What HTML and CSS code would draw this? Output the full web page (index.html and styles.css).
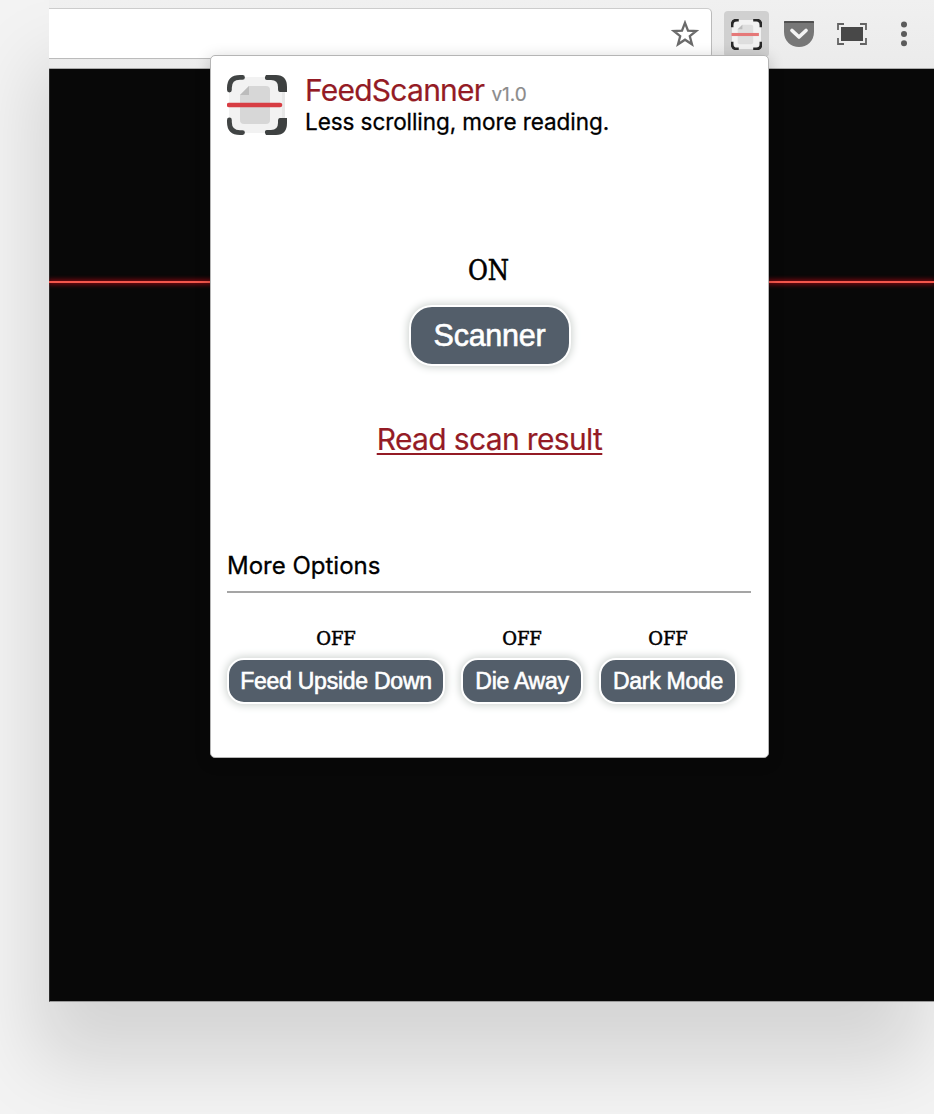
FILE: index.html
```html
<!DOCTYPE html>
<html lang="en">
<head>
<meta charset="utf-8">
<title>FeedScanner</title>
<link rel="stylesheet" href="styles.css">
</head>
<body>
<div class="window">
  <header class="toolbar">
    <div class="address">
      <svg class="star" viewBox="0 0 28 28"><path d="M14 2.8 17 10.6 25.3 11 18.8 16.2 21 24.3 14 19.7 7 24.3 9.2 16.2 2.7 11 11 10.6Z" fill="none" stroke="#6a6a6a" stroke-width="2.3"/></svg>
    </div>
    <div class="scanner-button">
      <svg viewBox="0 0 60 60">
        <rect x="2" y="2" width="56" height="56" rx="10" fill="#f2f2f2"/>
        <path d="M22 11H39Q43 11 43 15V45Q43 49 39 49H17Q13 49 13 45V20Z" fill="#dedede"/>
        <path d="M22 11V20H13Z" fill="#bbb"/>
        <path d="M2 16V12Q2 2 12 2H15M43 2H49Q58 2 58 12V16M58 44V49Q58 58 49 58H43M15 58H12Q2 58 2 48V44" fill="none" stroke="#282828" stroke-width="5.5"/>
        <path d="M1 30H54" stroke="#e57878" stroke-width="6"/>
      </svg>
    </div>
    <svg class="pocket" viewBox="0 0 30 27"><path d="M1 0H29Q30 0 30 1V11C30 20 23 26 15 26S0 20 0 11V1Q0 0 1 0Z" fill="#777"/><path d="M0 2V1Q0 0 1 0H29Q30 0 30 1V2Z" fill="#505050"/><path d="M8 9.5 15 16 22 9.5" fill="none" stroke="#f4f4f4" stroke-width="3.7" stroke-linecap="round" stroke-linejoin="round"/></svg>
    <svg class="capture" viewBox="0 0 30 22"><path d="M4 4H26V18H4Z" fill="#484848"/><path d="M1 7V1H7M23 1H29V7M29 15V21H23M7 21H1V15" fill="none" stroke="#636363" stroke-width="1.8"/></svg>
    <svg class="dots" viewBox="0 0 6 26"><circle cx="3" cy="3.5" r="3"/><circle cx="3" cy="13" r="3"/><circle cx="3" cy="22.3" r="3"/></svg>
  </header>
  <main class="page"><div class="scanline"></div></main>
  <section class="popup">
    <div class="brand">
      <svg class="logo" viewBox="0 0 60 60">
        <rect x="2" y="2" width="56" height="56" rx="11" fill="#e8e8e8"/>
        <rect x="2" y="2" width="53" height="56" rx="11" fill="#f2f2f2"/>
        <path d="M22 11H39Q43 11 43 15V45Q43 49 39 49H17Q13 49 13 45V20Z" fill="#d7d7d7"/>
        <path d="M22 11V20H13Z" fill="#bcbcbc"/>
        <path d="M2.4 15V13Q2.4 2.4 13 2.4H15.5M2.4 45V47Q2.4 57.6 13 57.6H15.5" fill="none" stroke="#414444" stroke-width="4.8" stroke-linecap="round"/>
        <path d="M39 0H49Q60 0 60 12V17H53Q51 17 51 14V12Q51 5 44 5H40Q37.5 5 38 2ZM39 60H49Q60 60 60 48V43H53Q51 43 51 46V48Q51 55 44 55H40Q37.5 55 38 58Z" fill="#3e4141"/>
        <path d="M2 30H53" stroke="#d73d43" stroke-width="4.6" stroke-linecap="round"/>
      </svg>
      <div class="brand-text">
        <h1><span class="name">FeedScanner</span><small>v1.0</small></h1>
        <p class="tagline">Less scrolling, more reading.</p>
      </div>
    </div>
    <div class="main-control">
      <span class="state state-large">ON</span>
      <button class="button button-large">Scanner</button>
      <a class="result" href="#">Read scan result</a>
    </div>
    <h2>More Options</h2>
    <div class="options">
      <div class="option option-feed"><span class="state">OFF</span><button class="button">Feed Upside Down</button></div>
      <div class="option option-die"><span class="state">OFF</span><button class="button">Die Away</button></div>
      <div class="option option-dark"><span class="state">OFF</span><button class="button">Dark Mode</button></div>
    </div>
  </section>
</div>
</body>
</html>
```
FILE: styles.css
```css
* { box-sizing: border-box; }
body { margin: 0; height: 1114px; overflow: hidden; background: #f3f3f3; font-family: Inter, sans-serif; color: #000; }
.window { position: relative; margin-left: 49px; height: 1001px; box-shadow: -13px 62px 70px rgba(0,0,0,.125); }
.toolbar { display: flex; height: 69px; padding-top: 8px; background: linear-gradient(#f0f0f0, #ebebeb); border-bottom: 1px solid #aaa; }
.address { width: 663px; height: 51px; flex: none; display: flex; justify-content: flex-end; padding: 11px 12px 0 0; background: #fff; border: 1px solid #bbb; border-left: 0; border-top-color: #ccc; border-radius: 0 5px 5px 0; }
.star { width: 28px; height: 28px; }
.scanner-button { width: 45px; height: 46px; margin: 3px 0 0 12px; flex: none; display: grid; place-items: center; background: #d0d0d0; border-radius: 4px; }
.scanner-button svg { width: 31px; height: 31px; }
.pocket { width: 30px; height: 27px; margin: 13px 0 0 15px; flex: none; }
.capture { width: 30px; height: 22px; margin: 15px 0 0 23px; flex: none; }
.dots { width: 6px; height: 26px; margin: 13px 0 0 34px; flex: none; fill: #5b5b5b; }
.page { height: 933px; padding-top: 212px; background: #080808; border-left: 1px solid #292929; border-bottom: 1px solid #999; }
.scanline { height: 2px; margin-left: -1px; background: #f2564b; box-shadow: 0 0 5px 1px #a00814; clip-path: inset(-10px 0); }
.popup { position: absolute; left: 161px; top: 55px; width: 559px; height: 703px; padding: 20px 17px 0; background: #fff; border: 1px solid #b5b5b5; border-radius: 5px; box-shadow: 0 3px 16px rgba(0,0,0,.2); }
.brand { display: flex; height: 60px; margin-left: -1px; margin-top: -1px; }
.logo { width: 60px; height: 60px; margin-right: 18px; }
h1 { display: flex; align-items: baseline; gap: 7px; height: 31px; margin: 0; font-size: 30px; line-height: 31px; font-weight: 400; color: #941b25; letter-spacing: -.75px; -webkit-text-stroke: .2px; white-space: nowrap; }
small { font-size: 19px; color: #8b8b8b; letter-spacing: 0; }
.tagline { margin: 0; font-size: 22.5px; line-height: 31px; letter-spacing: -.07px; -webkit-text-stroke: .3px; white-space: nowrap; }
.main-control { display: flex; flex-direction: column; align-items: center; height: 415px; padding-top: 115px; }
.state { font-family: "DejaVu Serif", serif; font-size: 18px; line-height: 22px; -webkit-text-stroke: .5px #000; }
.state-large { margin-left: -2px; font-family: "DejaVu Serif Condensed", "DejaVu Serif", serif; font-stretch: condensed; font-size: 27px; line-height: 42px; height: 40px; }
.button { height: 46px; padding: 0; border: 2px solid #fff; border-radius: 17px; background: #535e6a; color: #fff; font-family: "Liberation Sans", sans-serif; font-size: 23px; line-height: 40px; letter-spacing: -.25px; -webkit-text-stroke: .6px #fff; white-space: nowrap; box-shadow: 0 0 9px 1px #cbd0cd; }
.button-large { width: 162px; height: 61px; margin-top: 15px; border-radius: 23px; font-size: 30.5px; line-height: 53px; }
.result { margin-top: 53px; font-size: 30px; line-height: 40px; color: #941b25; letter-spacing: -.65px; -webkit-text-stroke: .2px; text-decoration-thickness: 2px; text-underline-offset: 3px; text-decoration-skip-ink: none; white-space: nowrap; }
h2 { height: 43px; margin: 0 0 0 -1px; font-size: 24px; line-height: 32px; font-weight: 400; -webkit-text-stroke: .3px; border-bottom: 2px solid #a5a5a5; }
.options { display: flex; gap: 16px; padding-top: 35px; margin-left: -1px; }
.option { display: flex; flex-direction: column; align-items: center; gap: 8px; }
.option .button { width: 100%; }
.option-feed { width: 218px; }
.option-die { width: 122px; }
.option-dark { width: 138px; }
```
